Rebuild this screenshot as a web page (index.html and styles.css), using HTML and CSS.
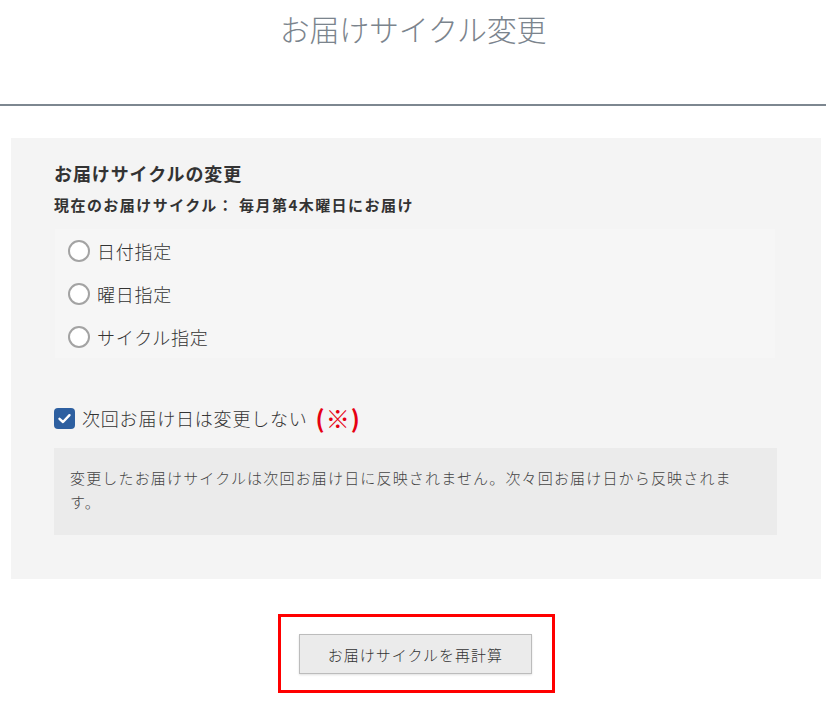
FILE: index.html
```html
<!DOCTYPE html>
<html lang="ja">
<head>
<meta charset="utf-8">
<title>お届けサイクル変更</title>
<link rel="stylesheet" href="styles.css">
</head>
<body>
<header class="page-header">
  <h1 class="page-title">お届けサイクル変更</h1>
</header>
<main>
  <section class="panel">
    <h2 class="panel-heading">お届けサイクルの変更</h2>
    <p class="current">現在のお届けサイクル： 毎月第4木曜日にお届け</p>
    <div class="radio-box">
      <label class="radio-row"><span class="radio"></span><span class="radio-label">日付指定</span></label>
      <label class="radio-row"><span class="radio"></span><span class="radio-label">曜日指定</span></label>
      <label class="radio-row"><span class="radio"></span><span class="radio-label">サイクル指定</span></label>
    </div>
    <label class="check-row">
      <span class="checkbox"><svg width="21" height="21" viewBox="0 0 21 21"><path d="M5.5 10.8 L9 14 L15.5 7.2" fill="none" stroke="#fff" stroke-width="2.4" stroke-linecap="round" stroke-linejoin="round"/></svg></span>
      <span class="check-label">次回お届け日は変更しない</span>
      <span class="note-mark">(※)</span>
    </label>
    <div class="notice">変更したお届けサイクルは次回お届け日に反映されません。次々回お届け日から反映されます。</div>
  </section>
  <div class="actions">
    <div class="highlight">
      <button class="recalc" type="button">お届けサイクルを再計算</button>
    </div>
  </div>
</main>
</body>
</html>
```
FILE: styles.css
```css
* { box-sizing: border-box; }
html, body {
  margin: 0;
  padding: 0;
  background: #fff;
  font-family: "Noto Sans CJK JP", "Noto Sans", sans-serif;
  color: #333;
}
.page-header {
  height: 106px;
  border-bottom: 2px solid #7d8790;
  padding-top: 6px;
}
.page-title {
  margin: 0;
  text-align: center;
  font-size: 30px;
  line-height: 44px;
  font-weight: 300;
  color: #7b848d;
  letter-spacing: -0.2px;
}
main {
  padding-top: 32px;
}
.panel {
  margin: 0 5px 0 11px;
  background: #f4f4f4;
  padding: 22px 44px 44px 43px;
}
.panel-heading {
  margin: 0;
  font-size: 18px;
  line-height: 27px;
  font-weight: 700;
  letter-spacing: 0.9px;
  color: #333;
}
.current {
  margin: 6px 0 0;
  font-size: 15px;
  line-height: 24px;
  font-weight: 700;
  letter-spacing: 1.45px;
  color: #333;
}
.radio-box {
  margin: 12px 2px 0 1px;
  background: #f6f6f6;
  display: flex;
  flex-direction: column;
}
.radio-row {
  height: 43px;
  display: flex;
  align-items: center;
  padding-left: 13px;
}
.radio {
  width: 22px;
  height: 22px;
  border-radius: 50%;
  border: 2px solid #a3a3a3;
  background: #fff;
  flex: none;
}
.radio-label {
  margin-left: 7px;
  font-size: 18px;
  font-weight: 300;
  letter-spacing: 0.75px;
  color: #333;
}
.check-row {
  margin-top: 45px;
  height: 30px;
  display: flex;
  align-items: center;
}
.checkbox {
  width: 21px;
  height: 21px;
  border-radius: 4px;
  background: #2d5fa0;
  flex: none;
  display: flex;
}
.check-label {
  margin-left: 7px;
  font-size: 18px;
  font-weight: 300;
  letter-spacing: 0.8px;
  color: #333;
}
.note-mark {
  margin-left: 8px;
  font-size: 24px;
  line-height: 30px;
  font-weight: 700;
  color: #e60012;
  letter-spacing: 1px;
}
.notice {
  margin-top: 15px;
  background: #ebebeb;
  padding: 18px 30px 21px 16px;
  font-size: 15px;
  font-weight: 300;
  line-height: 24px;
  letter-spacing: 1.17px;
  color: #444;
}
.actions {
  display: flex;
  justify-content: center;
  padding: 35px 0 0 7px;
}
.highlight {
  border: 3px solid #ff0000;
  padding: 17px 20px 16px 18px;
}
.recalc {
  width: 233px;
  height: 40px;
  background: #ebebeb;
  border: 1px solid #bcbcbc;
  box-shadow: 0 1px 2px rgba(0,0,0,0.12);
  font-family: "Noto Sans CJK JP", "Noto Sans", sans-serif;
  font-size: 15px;
  font-weight: 300;
  letter-spacing: 1px;
  color: #333;
  padding: 0;
  display: block;
}
```
